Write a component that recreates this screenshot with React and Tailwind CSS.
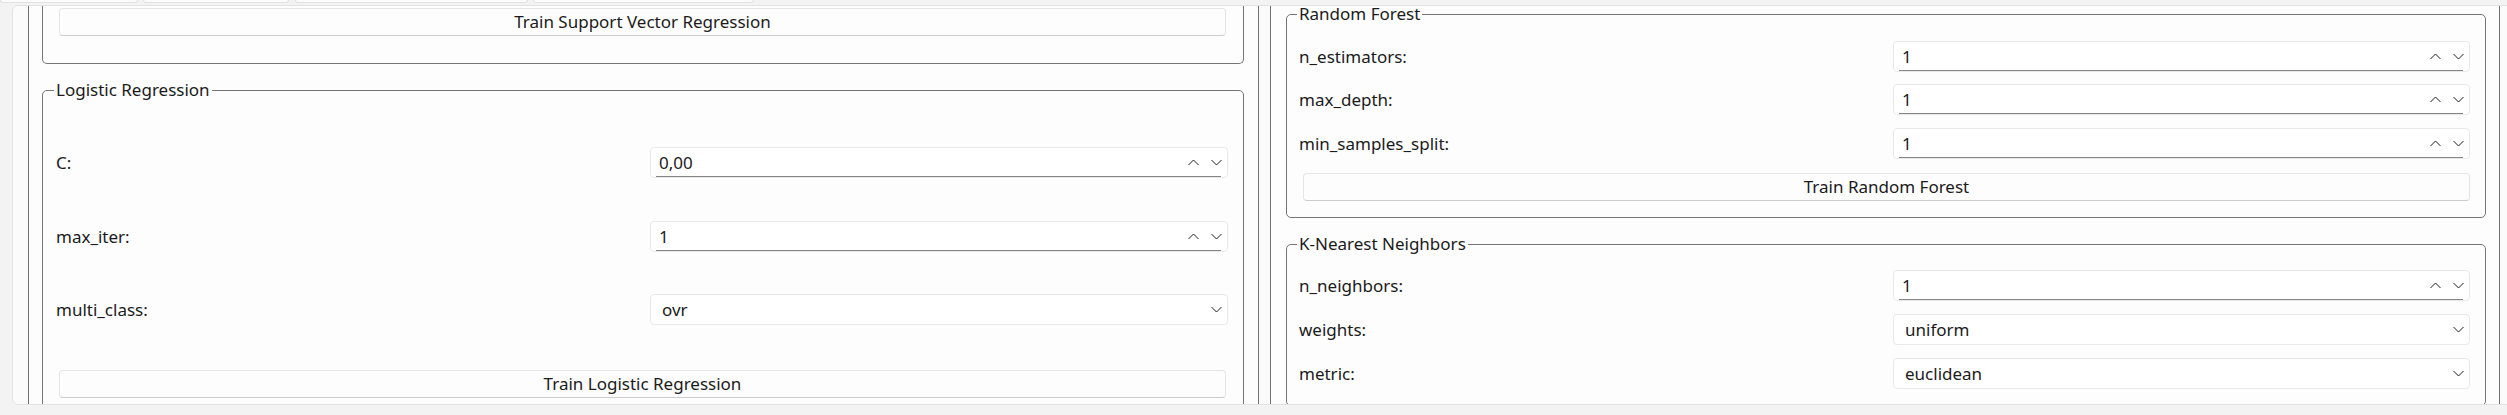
import React from "react";

function Chevron({ up }) {
  return (
    <svg width="11" height="7" viewBox="0 0 11 7" className="block">
      <polyline
        points={up ? "0.5,6 5.5,1 10.5,6" : "0.5,1 5.5,6 10.5,1"}
        fill="none"
        stroke="#1f1f1f"
        strokeWidth="1"
      />
    </svg>
  );
}

function SpinBox({ value }) {
  return (
    <div className="relative h-[31px] bg-white border border-[#e9e9e9] rounded-[4px] flex items-center pl-[8px] pr-[5px]">
      <span className="flex-1">{value}</span>
      <div className="flex items-center gap-[12px]">
        <Chevron up />
        <Chevron />
      </div>
      <div className="absolute left-[5px] right-[6px] bottom-0 h-[1px] bg-[#858585]" />
    </div>
  );
}

function Combo({ value }) {
  return (
    <div className="h-[31px] bg-white border border-[#e9e9e9] rounded-[4px] flex items-center pl-[11px] pr-[5px]">
      <span className="flex-1">{value}</span>
      <Chevron />
    </div>
  );
}

function Button({ children, className }) {
  return (
    <div
      className={
        "h-[28px] bg-[#fdfdfd] border border-[#e5e5e5] border-b-[#cdcdcd] rounded-[4px] flex items-center justify-center " +
        className
      }
    >
      {children}
    </div>
  );
}

function Row({ label, children, className }) {
  return (
    <div className={"flex items-center " + className}>
      <div className="w-[594px] shrink-0">{label}</div>
      <div className="flex-1">{children}</div>
    </div>
  );
}

function TopStrip() {
  return (
    <div className="h-[5px] shrink-0 flex">
      <div className="w-[138px] h-[3px] bg-[#fbfbfb] border-x border-b border-[#e2e2e2] rounded-b-[3px]" />
      <div className="ml-[5px] w-[146px] h-[3px] bg-[#fbfbfb] border-x border-b border-[#e2e2e2] rounded-b-[3px]" />
      <div className="ml-[6px] w-[233px] h-[3px] bg-[#fbfbfb] border-x border-b border-[#e2e2e2] rounded-b-[3px]" />
      <div className="ml-[5px] w-[221px] h-[3px] bg-[#fbfbfb] border-x border-b border-[#e2e2e2] rounded-b-[3px]" />
    </div>
  );
}

export default function App() {
  return (
    <div className="w-[2507px] h-[415px] bg-[#f3f3f3] flex flex-col overflow-hidden font-['Noto_Sans',sans-serif] text-[17px] leading-[20px] text-[#1b1b1b]">
      <TopStrip />
      <div className="ml-[12px] -mr-[8px] h-[400px] shrink-0 bg-[#fbfbfb] border border-[#e3e3e3] rounded-[6px] overflow-hidden flex gap-[11px] pl-[15px]">
        {/* Left scroll area */}
        <div className="w-[1231px] shrink-0 h-full border-x border-[#707070] bg-[#fdfdfd] overflow-hidden">
          <div className="ml-[13px] w-[1202px]">
            <div className="border-x border-b border-[#767676] rounded-b-[5px] pl-[16px] pr-[17px] pt-[2px] pb-[27px]">
              <Button>Train Support Vector Regression</Button>
            </div>
            <fieldset className="mt-[18px] border border-[#767676] rounded-[5px]">
              <legend className="ml-[11px] px-[2px] leading-[16px]">Logistic Regression</legend>
              <div className="pl-[13px] pr-[15px] pb-[20px]">
                <Row label="C:" className="mt-[49px]">
                  <SpinBox value="0,00" />
                </Row>
                <Row label="max_iter:" className="mt-[43px]">
                  <SpinBox value="1" />
                </Row>
                <Row label="multi_class:" className="mt-[42px]">
                  <Combo value="ovr" />
                </Row>
                <Button className="mt-[45px] ml-[3px] mr-[2px]">Train Logistic Regression</Button>
              </div>
            </fieldset>
          </div>
        </div>
        {/* Right scroll area */}
        <div className="w-[1230px] shrink-0 h-full border-x border-[#707070] bg-[#fdfdfd] overflow-hidden">
          <div className="ml-[15px] w-[1200px]">
            <fieldset className="border border-[#767676] rounded-[5px]">
              <legend className="ml-[10px] px-[2px] leading-[16px]">Random Forest</legend>
              <div className="pl-[12px] pr-[15px] pb-[16px]">
                <Row label="n_estimators:" className="mt-[19px]">
                  <SpinBox value="1" />
                </Row>
                <Row label="max_depth:" className="mt-[12px]">
                  <SpinBox value="1" />
                </Row>
                <Row label="min_samples_split:" className="mt-[13px]">
                  <SpinBox value="1" />
                </Row>
                <Button className="mt-[14px] ml-[4px]">Train Random Forest</Button>
              </div>
            </fieldset>
            <fieldset className="mt-[18px] border border-[#767676] rounded-[5px]">
              <legend className="ml-[10px] px-[2px] leading-[16px]">K-Nearest Neighbors</legend>
              <div className="pl-[12px] pr-[15px] pb-[16px]">
                <Row label="n_neighbors:" className="mt-[18px]">
                  <SpinBox value="1" />
                </Row>
                <Row label="weights:" className="mt-[13px]">
                  <Combo value="uniform" />
                </Row>
                <Row label="metric:" className="mt-[13px]">
                  <Combo value="euclidean" />
                </Row>
              </div>
            </fieldset>
          </div>
        </div>
      </div>
    </div>
  );
}
